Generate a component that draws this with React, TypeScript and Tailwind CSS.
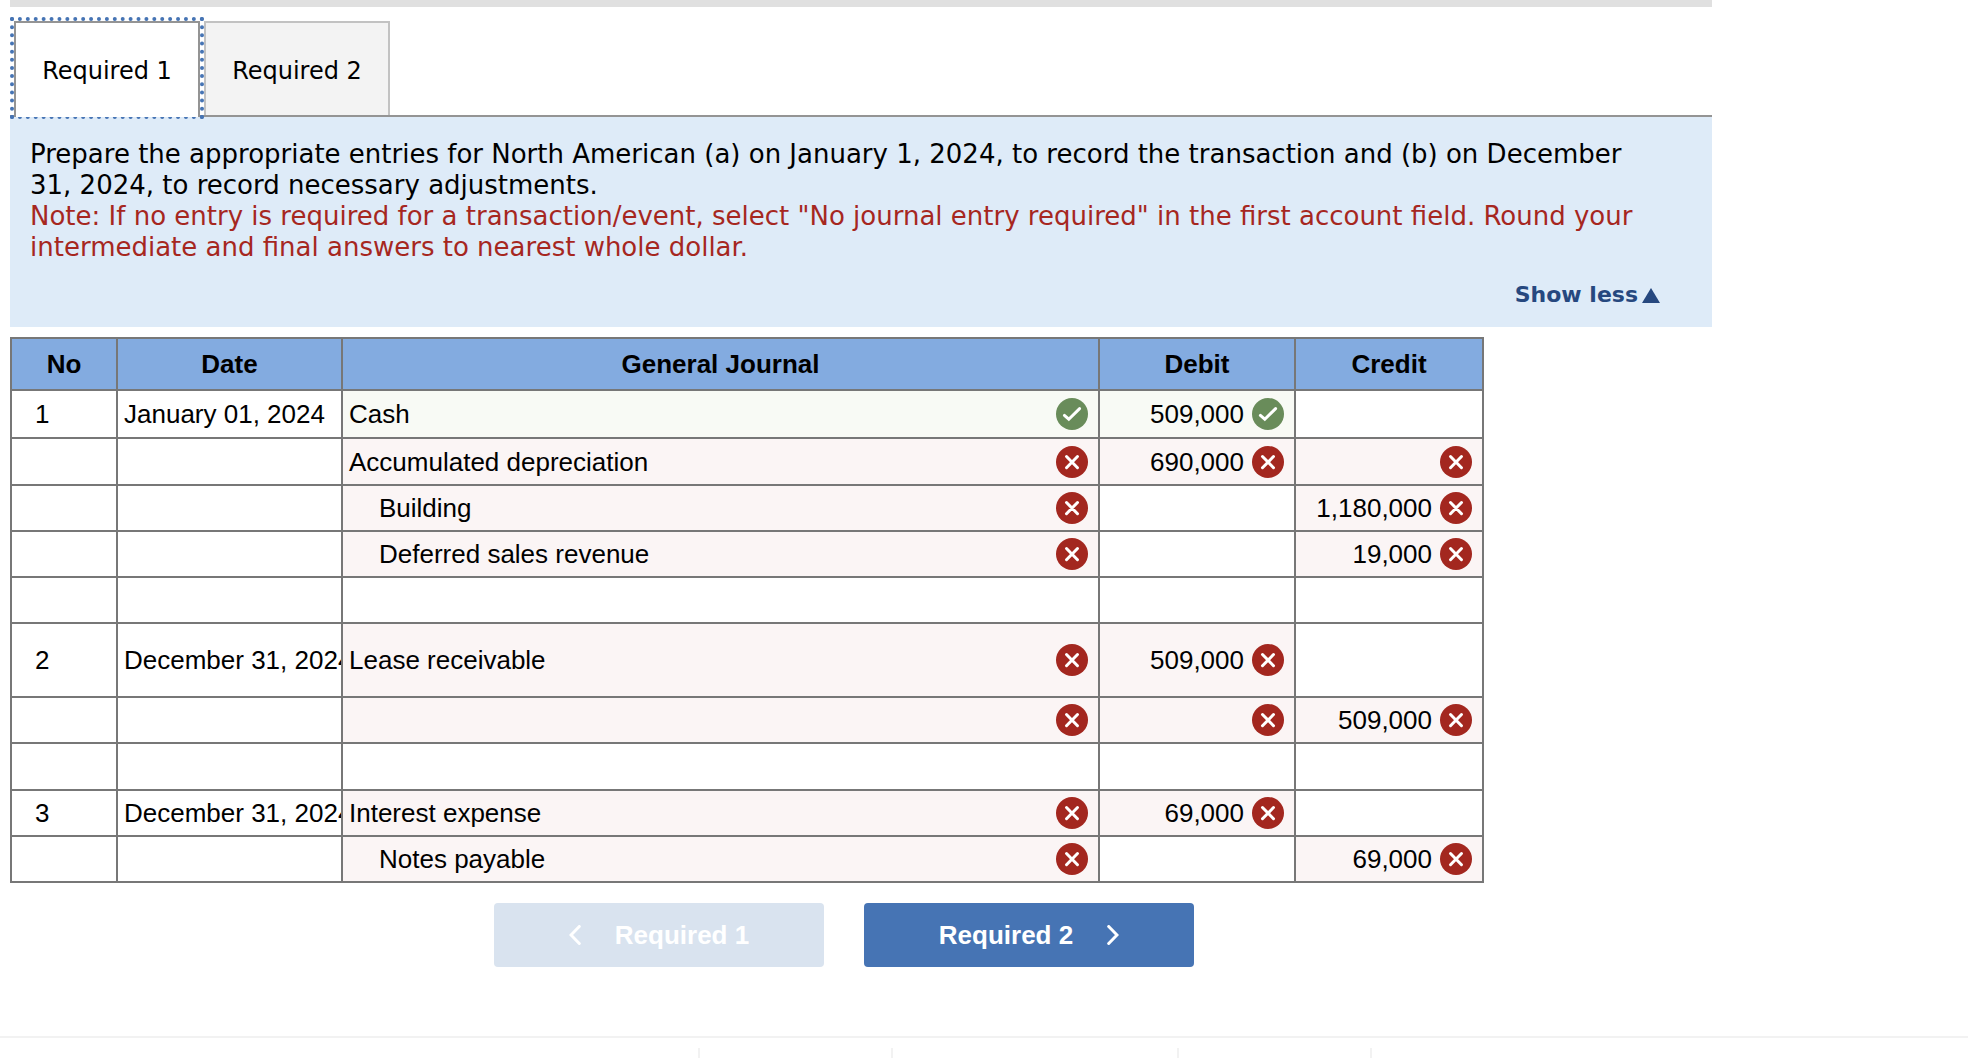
import React, { useState } from 'react';

type Mark = 'right' | 'wrong';

interface Cell {
  text?: string;
  mark?: Mark;
  indent?: boolean;
}

interface Entry {
  no?: string;
  date?: string;
  height: string;
  account?: Cell;
  debit?: Cell;
  credit?: Cell;
}

const entries: Entry[] = [
  {
    no: '1',
    date: 'January 01, 2024',
    height: 'h-12',
    account: { text: 'Cash', mark: 'right' },
    debit: { text: '509,000', mark: 'right' },
  },
  {
    height: 'h-[47px]',
    account: { text: 'Accumulated depreciation', mark: 'wrong' },
    debit: { text: '690,000', mark: 'wrong' },
    credit: { mark: 'wrong' },
  },
  {
    height: 'h-[46px]',
    account: { text: 'Building', mark: 'wrong', indent: true },
    credit: { text: '1,180,000', mark: 'wrong' },
  },
  {
    height: 'h-[46px]',
    account: { text: 'Deferred sales revenue', mark: 'wrong', indent: true },
    credit: { text: '19,000', mark: 'wrong' },
  },
  { height: 'h-[46px]' },
  {
    no: '2',
    date: 'December 31, 2024',
    height: 'h-[74px]',
    account: { text: 'Lease receivable', mark: 'wrong' },
    debit: { text: '509,000', mark: 'wrong' },
  },
  {
    height: 'h-[46px]',
    account: { mark: 'wrong' },
    debit: { mark: 'wrong' },
    credit: { text: '509,000', mark: 'wrong' },
  },
  { height: 'h-[47px]' },
  {
    no: '3',
    date: 'December 31, 2024',
    height: 'h-[46px]',
    account: { text: 'Interest expense', mark: 'wrong' },
    debit: { text: '69,000', mark: 'wrong' },
  },
  {
    height: 'h-[46px]',
    account: { text: 'Notes payable', mark: 'wrong', indent: true },
    credit: { text: '69,000', mark: 'wrong' },
  },
];

const MarkIcon = ({ mark }: { mark: Mark }) => (
  <svg
    viewBox="0 0 32 32"
    className="h-8 w-8 shrink-0"
    fill="none"
    stroke="#fff"
    strokeLinecap="round"
    role="img"
    aria-label={mark === 'right' ? 'correct' : 'incorrect'}
  >
    <circle cx="16" cy="16" r="16" stroke="none" fill={mark === 'right' ? '#698c5a' : '#a3271f'} />
    {mark === 'right' ? (
      <path d="M8.4 17.4L12.8 21.2L23.6 10.6" strokeWidth="3" />
    ) : (
      <path d="M10.5 10.5L21.5 21.7M21.5 10.5L10.5 21.7" strokeWidth="3" />
    )}
  </svg>
);

const cellColor = (cell?: Cell) => {
  if (!cell) return 'bg-white';
  return cell.mark === 'right' ? 'bg-[#f8faf5]' : 'bg-[#fbf5f5]';
};

const AmountCell = ({ cell }: { cell?: Cell }) => (
  <td className={`border-2 border-[#777777] pr-[10px] ${cellColor(cell)}`}>
    {cell && (
      <div className="flex items-center justify-end gap-2">
        <span>{cell.text}</span>
        {cell.mark && <MarkIcon mark={cell.mark} />}
      </div>
    )}
  </td>
);

const App = () => {
  const [expanded, setExpanded] = useState(true);

  return (
    <div className="bg-white font-['Liberation_Sans',Arial,sans-serif] text-[26px] leading-[30px] text-black">
      <main className="max-w-[1712px] pl-[10px]">
        <div className="h-[7px] bg-[#e0e0e0]" />

        {/* Tabs */}
        <div role="tablist" className="mt-[14px] flex gap-1 pl-1 font-['DejaVu_Sans',Verdana,sans-serif] text-2xl">
          <div className="relative">
            <button
              role="tab"
              aria-selected="true"
              className="h-[94px] w-[186px] border-2 border-b-0 border-[#949494] bg-white pt-1 outline-4 outline-dotted outline-[#4674b4]"
            >
              Required 1
            </button>
            {/* hides the panel's top line under the open tab */}
            <span className="absolute inset-x-0 top-full z-10 h-[2px] border-x-2 border-[#949494] bg-white" />
          </div>
          <button
            role="tab"
            aria-selected="false"
            className="h-[94px] w-[186px] border-2 border-b-0 border-[#c2c2c2] bg-[#f3f3f3] pt-1"
          >
            Required 2
          </button>
        </div>

        {/* Instructions */}
        <section className="border-t-2 border-[#949494] bg-[#deebf8] px-5 pt-[22px] pb-[18px] font-['DejaVu_Sans',Verdana,sans-serif] leading-[31px]">
          <p className="pr-6">
            Prepare the appropriate entries for North American (a) on January 1, 2024, to record the transaction and (b)
            on December 31, 2024, to record necessary adjustments.
          </p>
          {expanded && (
            <p className="pr-6 text-[#a6271f]">
              Note: If no entry is required for a transaction/event, select "No journal entry required" in the first
              account field. Round your intermediate and final answers to nearest whole dollar.
            </p>
          )}
          <div className="mt-[18px] flex justify-end pr-8">
            <button
              onClick={() => setExpanded(!expanded)}
              className="flex items-center gap-1 text-[22px] leading-[28px] font-bold text-[#26487f]"
            >
              {expanded ? 'Show less' : 'Show more'}
              <svg viewBox="0 0 18 15" className="h-[15px] w-[18px]" fill="currentColor" aria-hidden="true">
                <path d="M9 0L18 15H0Z" />
              </svg>
            </button>
          </div>
        </section>

        {/* Journal */}
        <table className="mt-[10px] w-full max-w-[1474px] table-fixed border-collapse">
          <colgroup>
            <col className="w-[106px]" />
            <col className="w-[225px]" />
            <col />
            <col className="w-[196px]" />
            <col className="w-[188px]" />
          </colgroup>
          <thead>
            <tr className="h-[52px] bg-[#83abe0]">
              <th className="border-2 border-[#777777]">No</th>
              <th className="border-2 border-[#777777]">Date</th>
              <th className="border-2 border-[#777777]">General Journal</th>
              <th className="border-2 border-[#777777]">Debit</th>
              <th className="border-2 border-[#777777]">Credit</th>
            </tr>
          </thead>
          <tbody>
            {entries.map((entry, index) => (
              <tr key={index} className={entry.height}>
                <td className="border-2 border-[#777777] pl-[23px]">{entry.no}</td>
                <td className="overflow-hidden border-2 border-[#777777] pl-[6px] whitespace-nowrap">{entry.date}</td>
                <td className={`border-2 border-[#777777] pr-[10px] pl-[6px] ${cellColor(entry.account)}`}>
                  {entry.account && (
                    <div className="flex items-center justify-between">
                      <span className={entry.account.indent ? 'pl-[30px]' : ''}>{entry.account.text}</span>
                      {entry.account.mark && <MarkIcon mark={entry.account.mark} />}
                    </div>
                  )}
                </td>
                <AmountCell cell={entry.debit} />
                <AmountCell cell={entry.credit} />
              </tr>
            ))}
          </tbody>
        </table>

        {/* Previous / next */}
        <div className="mt-5 flex justify-center gap-10 pr-[34px] font-bold text-white">
          <button
            disabled
            className="flex h-16 w-[330px] items-center justify-center gap-[34px] rounded bg-[#d9e3ef]"
          >
            <svg viewBox="0 0 12 20" className="h-5 w-3" fill="none" stroke="currentColor" strokeWidth="3" strokeLinecap="round" aria-hidden="true">
              <path d="M10.3 1.5L2 10L10.3 18.5" />
            </svg>
            Required 1
          </button>
          <button className="flex h-16 w-[330px] items-center justify-center gap-[34px] rounded bg-[#4674b4]">
            Required 2
            <svg viewBox="0 0 12 20" className="h-5 w-3" fill="none" stroke="currentColor" strokeWidth="3" strokeLinecap="round" aria-hidden="true">
              <path d="M1.7 1.5L10 10L1.7 18.5" />
            </svg>
          </button>
        </div>
      </main>

      {/* Page footer */}
      <footer className="mt-[69px] border-t-2 border-[#f2f2f2] pt-[10px] pl-[698px]">
        <div className="flex h-[10px]">
          <div className="w-[193px] border-l-2 border-[#f2f2f2]" />
          <div className="w-[286px] border-l-2 border-[#f2f2f2]" />
          <div className="w-[195px] border-x-2 border-[#f2f2f2]" />
        </div>
      </footer>
    </div>
  );
};

export default App;
